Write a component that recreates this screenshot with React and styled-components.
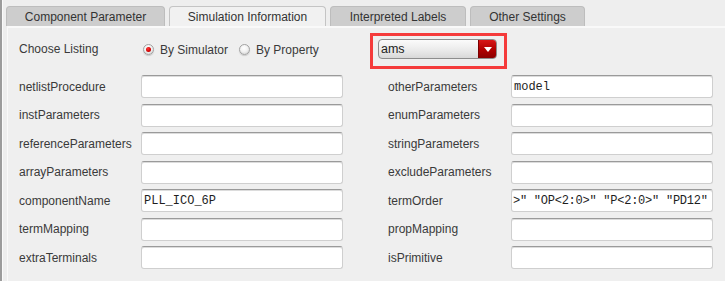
import React from 'react'
import styled, { createGlobalStyle } from 'styled-components'

const GlobalStyle = createGlobalStyle`
  html, body {
    margin: 0;
    padding: 0;
    background: #efefef;
  }
  body {
    font-family: "Liberation Sans", Arial, sans-serif;
    font-size: 12px;
    color: #333;
  }
`

const StyledFrame = styled.div`
  width: 725px;
  height: 281px;
  box-sizing: border-box;
  border-left: 2px solid #9c9c9c;
  box-shadow: inset 1px 0 0 #fafafa;
  padding-left: 4px;
  padding-top: 6px;
  overflow: hidden;
  background: #eeeeee;
`

const StyledTabBar = styled.div`
  display: flex;
  gap: 4px;
  height: 20px;
`

const StyledTab = styled.div`
  width: ${props => props.width};
  box-sizing: border-box;
  height: 20px;
  display: flex;
  align-items: center;
  justify-content: center;
  padding-top: 1px;
  border: 1px solid ${props => (props.active ? '#c4c4c4' : '#bdbdbd')};
  border-bottom: none;
  border-radius: 4px 4px 0 0;
  background: ${props => (props.active ? '#f1f1f1' : '#cdcdcd')};
  color: #333;
  font-size: 12px;
  white-space: nowrap;
`

const StyledPanel = styled.div`
  margin-left: 1px;
  border-top: 2px solid #f9f9f9;
  border-left: 1px solid #f9f9f9;
  background: #efefef;
  padding: 11px 0 20px 11px;
  height: 260px;
  box-sizing: border-box;
`

const StyledListingRow = styled.div`
  display: flex;
  align-items: center;
  height: 20px;
`

const StyledText = styled.span`
  width: ${props => props.width || 'auto'};
  flex-shrink: 0;
  font-size: 12px;
  color: #3a3a3a;
  white-space: nowrap;
`

const StyledRadioGroup = styled.div`
  display: flex;
  align-items: center;
  width: 235px;
  padding-top: 1px;
`

const StyledRadioOption = styled.label`
  display: flex;
  align-items: center;
  gap: 6px;
  margin-right: 11px;
`

const StyledRadio = styled.span`
  width: 11px;
  height: 11px;
  box-sizing: border-box;
  border-radius: 50%;
  border: 1px solid #a2a2a2;
  background: radial-gradient(circle at 45% 35%, #ffffff 0%, #f2f2f2 45%, #cdcdcd 100%);
  box-shadow: 0 1px 1px rgba(0, 0, 0, 0.15);
  display: flex;
  align-items: center;
  justify-content: center;

  &::after {
    content: '';
    display: ${props => (props.checked ? 'block' : 'none')};
    width: 5px;
    height: 5px;
    border-radius: 50%;
    background: radial-gradient(circle at 40% 35%, #ff3a3a 0%, #d00000 60%, #a00000 100%);
  }
`

const StyledComboCell = styled.div`
  position: relative;
`

const StyledCombo = styled.div`
  width: 119px;
  height: 20px;
  box-sizing: border-box;
  display: flex;
  border: 1px solid #8d8d8d;
  border-radius: 4px;
  background: linear-gradient(#fbfbfb, #e9e9e9 60%, #d8d8d8);
  overflow: hidden;
`

const StyledComboValue = styled.span`
  flex: 1;
  padding-left: 2px;
  font-size: 12.5px;
  line-height: 18px;
  color: #222;
`

const StyledComboArrow = styled.span`
  width: 17px;
  display: flex;
  align-items: center;
  justify-content: center;
  background: linear-gradient(#d81818, #b00000 55%, #8c0000);
  border-left: 1px solid #7a0000;
`

const StyledHighlight = styled.div`
  position: absolute;
  left: -8px;
  top: -6px;
  width: 137px;
  height: 36px;
  box-sizing: border-box;
  border: 3px solid #f53b3b;
  pointer-events: none;
`

const StyledFields = styled.div`
  display: flex;
  gap: 45px;
  margin-top: 16px;
`

const StyledColumn = styled.div`
  display: grid;
  grid-template-columns: ${props => props.labelWidth} 202px;
  grid-auto-rows: 23px;
  row-gap: 5.5px;
  align-items: center;
`

const StyledField = styled.div`
  height: 23px;
  box-sizing: border-box;
  background: #ffffff;
  border: 1px solid #cfcfcf;
  border-top-color: #9a9a9a;
  border-radius: 3px;
  box-shadow: inset 0 1px 0 #dcdcdc;
  padding-left: ${props => props.indent || '2px'};
  display: flex;
  align-items: center;
  overflow: hidden;
  font-family: "Liberation Mono", "Courier New", monospace;
  font-size: 12px;
  letter-spacing: ${props => props.spacing || '0'};
  color: #1e1e1e;
  white-space: pre;
`

const leftFields = [
  { name: 'netlistProcedure' },
  { name: 'instParameters' },
  { name: 'referenceParameters' },
  { name: 'arrayParameters' },
  { name: 'componentName', value: 'PLL_ICO_6P' },
  { name: 'termMapping' },
  { name: 'extraTerminals' },
]

const rightFields = [
  { name: 'otherParameters', value: 'model' },
  { name: 'enumParameters' },
  { name: 'stringParameters' },
  { name: 'excludeParameters' },
  {
    name: 'termOrder',
    value: '>" "OP<2:0>" "P<2:0>" "PD12"',
    indent: '1px',
    spacing: '-0.25px',
  },
  { name: 'propMapping' },
  { name: 'isPrimitive' },
]

const tabs = [
  { title: 'Component Parameter', width: '159px' },
  { title: 'Simulation Information', width: '157px', active: true },
  { title: 'Interpreted Labels', width: '136px' },
  { title: 'Other Settings', width: '115px' },
]

const FieldColumn = ({ fields, labelWidth }) => (
  <StyledColumn labelWidth={labelWidth}>
    {fields.map(field => (
      <React.Fragment key={field.name}>
        <StyledText>{field.name}</StyledText>
        <StyledField indent={field.indent} spacing={field.spacing}>
          {field.value || ''}
        </StyledField>
      </React.Fragment>
    ))}
  </StyledColumn>
)

export default function App() {
  return (
    <>
      <GlobalStyle />
      <StyledFrame>
        <StyledTabBar>
          {tabs.map(tab => (
            <StyledTab key={tab.title} width={tab.width} active={tab.active}>
              {tab.title}
            </StyledTab>
          ))}
        </StyledTabBar>
        <StyledPanel>
          <StyledListingRow>
            <StyledText width="124px">Choose Listing</StyledText>
            <StyledRadioGroup>
              <StyledRadioOption>
                <StyledRadio checked />
                <StyledText>By Simulator</StyledText>
              </StyledRadioOption>
              <StyledRadioOption>
                <StyledRadio />
                <StyledText>By Property</StyledText>
              </StyledRadioOption>
            </StyledRadioGroup>
            <StyledComboCell>
              <StyledCombo>
                <StyledComboValue>ams</StyledComboValue>
                <StyledComboArrow>
                  <svg width="8" height="5" viewBox="0 0 8 5">
                    <path d="M0 0 H8 L4 5 Z" fill="#ffffff" />
                  </svg>
                </StyledComboArrow>
              </StyledCombo>
              <StyledHighlight />
            </StyledComboCell>
          </StyledListingRow>
          <StyledFields>
            <FieldColumn fields={leftFields} labelWidth="122px" />
            <FieldColumn fields={rightFields} labelWidth="123px" />
          </StyledFields>
        </StyledPanel>
      </StyledFrame>
    </>
  )
}
